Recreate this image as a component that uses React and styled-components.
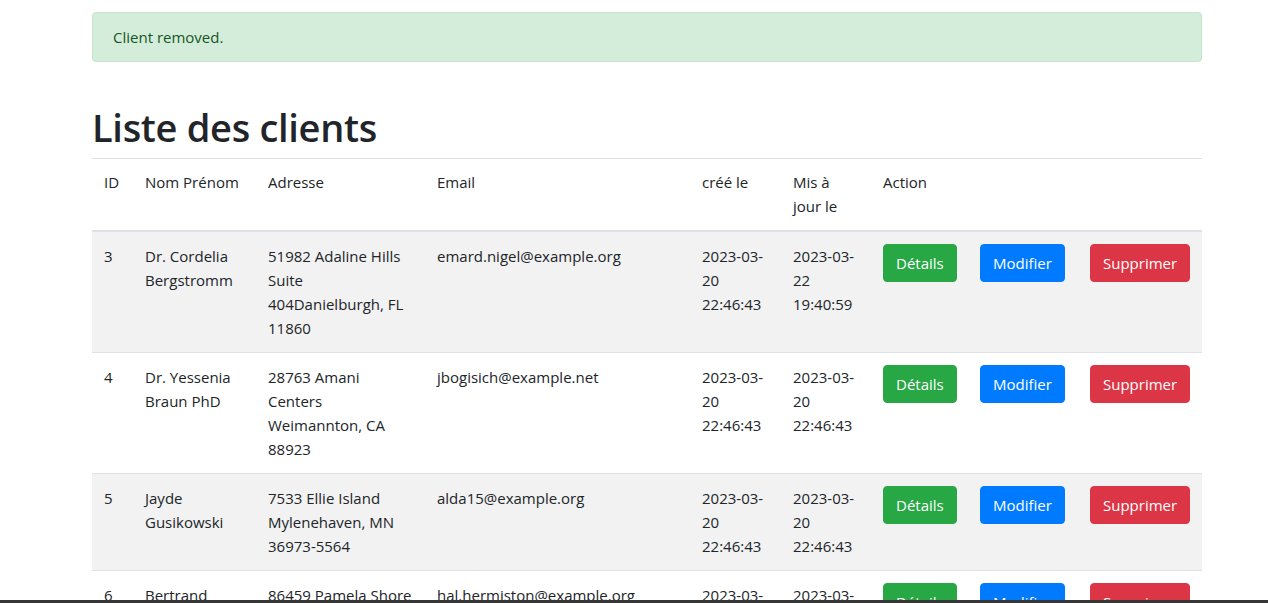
import React from "react";
import styled, { createGlobalStyle } from "styled-components";

const GlobalStyle = createGlobalStyle`
  html, body {
    margin: 0;
    padding: 0;
    background: #fff;
  }
  body {
    font-family: "Open Sans", "Noto Sans", sans-serif;
    font-size: 15px;
    line-height: 24px;
    color: #212529;
  }
  * {
    box-sizing: border-box;
  }
`;

const clients = [
  {
    id: 3,
    name: "Dr. Cordelia Bergstromm",
    address: "51982 Adaline Hills Suite 404Danielburgh, FL 11860",
    email: "emard.nigel@example.org",
    created: "2023-03-20 22:46:43",
    updated: "2023-03-22 19:40:59",
  },
  {
    id: 4,
    name: "Dr. Yessenia Braun PhD",
    address: "28763 Amani Centers Weimannton, CA 88923",
    email: "jbogisich@example.net",
    created: "2023-03-20 22:46:43",
    updated: "2023-03-20 22:46:43",
  },
  {
    id: 5,
    name: "Jayde Gusikowski",
    address: "7533 Ellie Island Mylenehaven, MN 36973-5564",
    email: "alda15@example.org",
    created: "2023-03-20 22:46:43",
    updated: "2023-03-20 22:46:43",
  },
  {
    id: 6,
    name: "Bertrand Kuhlman",
    address: "86459 Pamela Shore Apt. 120",
    email: "hal.hermiston@example.org",
    created: "2023-03-20 22:46:43",
    updated: "2023-03-20 22:46:43",
  },
];

const columns = [41, 123, 169, 265, 91, 90, 97, 110, 124];

function App() {
  return (
    <>
      <GlobalStyle />
      <Container>
        <Alert>Client removed.</Alert>
        <Title>Liste des clients</Title>
        <Table>
          <colgroup>
            {columns.map((w, i) => (
              <col key={i} style={{ width: w }} />
            ))}
          </colgroup>
          <thead>
            <tr>
              <th>ID</th>
              <th>Nom Prénom</th>
              <th>Adresse</th>
              <th>Email</th>
              <th>créé le</th>
              <th>Mis à jour le</th>
              <th colSpan={3}>Action</th>
            </tr>
          </thead>
          <tbody>
            {clients.map((c) => (
              <tr key={c.id}>
                <td>{c.id}</td>
                <td>{c.name}</td>
                <td>{c.address}</td>
                <td>{c.email}</td>
                <td>{c.created}</td>
                <td>{c.updated}</td>
                <td>
                  <Button $variant="success">Détails</Button>
                </td>
                <td>
                  <Button $variant="primary">Modifier</Button>
                </td>
                <td>
                  <Button $variant="danger">Supprimer</Button>
                </td>
              </tr>
            ))}
          </tbody>
        </Table>
      </Container>
      <BottomEdge />
    </>
  );
}

const Container = styled.div`
  width: 1110px;
  margin-left: 92px;
  padding-top: 12px;
`;

const Alert = styled.div`
  padding: 12px 20px;
  border: 1px solid #c3e6cb;
  border-radius: 4px;
  background: #d4edda;
  color: #155724;
  margin-bottom: 41px;
`;

const Title = styled.h1`
  font-size: 38px;
  font-weight: 600;
  line-height: 48px;
  margin: 0 0 7px;
  letter-spacing: -0.3px;
`;

const Table = styled.table`
  width: 1110px;
  table-layout: fixed;
  border-collapse: collapse;

  & th,
  & td {
    padding: 12px;
    vertical-align: top;
    text-align: left;
    border-top: 1px solid #dee2e6;
  }

  & th {
    font-weight: 400;
    padding-top: 11px;
    border-bottom: 2px solid #dee2e6;
  }

  & tbody tr:nth-of-type(odd) {
    background: #f2f2f2;
  }
`;

const palette = {
  success: "#28a745",
  primary: "#007bff",
  danger: "#dc3545",
};

const Button = styled.button`
  display: inline-block;
  font-family: inherit;
  font-size: 15px;
  line-height: 24px;
  padding: 6px 12px;
  color: #fff;
  background: ${(p) => palette[p.$variant]};
  border: 1px solid ${(p) => palette[p.$variant]};
  border-radius: 4px;
  white-space: nowrap;
  cursor: pointer;
`;

const BottomEdge = styled.div`
  position: fixed;
  left: 0;
  right: 0;
  bottom: 0;
  height: 3px;
  background: #363636;
`;

export default App;
